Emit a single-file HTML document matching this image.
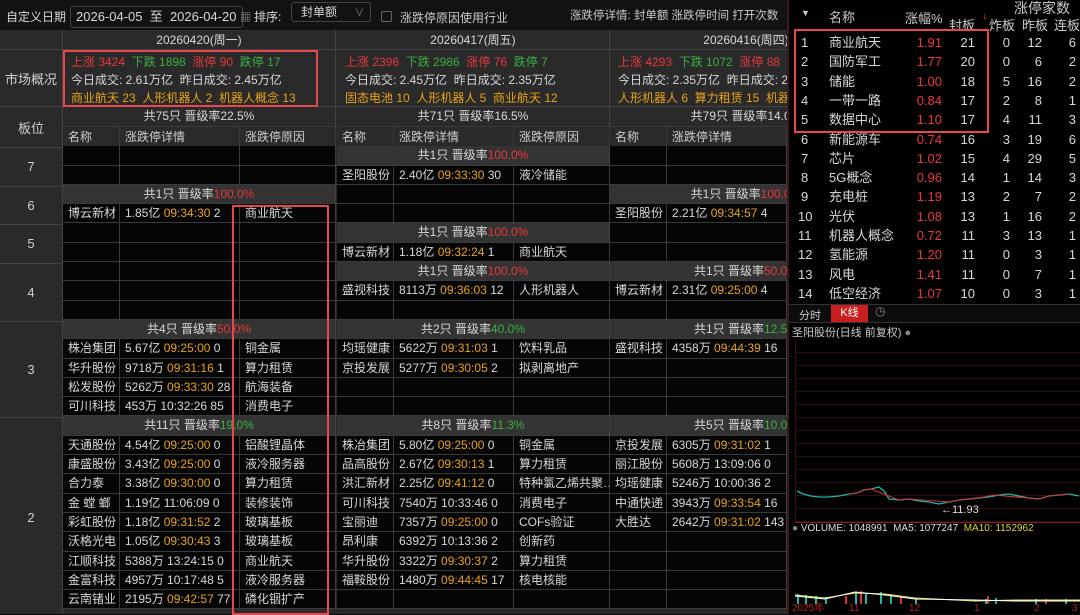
<!DOCTYPE html>
<html><head><meta charset="utf-8"><style>
*{margin:0;padding:0;box-sizing:border-box}
body{width:1080px;height:614px;overflow:hidden;background:#0a0a0a;font-family:"Liberation Sans","Noto Sans CJK SC",sans-serif;font-size:12px;color:#d8d8d8;position:relative}
.a{position:absolute;white-space:nowrap}
.top{left:0;top:0;width:787px;height:30px;background:#121212}
.left{left:0;top:30px;width:787px;height:584px;overflow:hidden;background:#2a2a2a}
.day{position:absolute;top:0;width:273px}
.hd{height:20px;line-height:20px;text-align:center;border-bottom:1px solid #444;border-right:1px solid #444;background:#2a2a2a}
.mk{height:57px;border-bottom:1px solid #444;border-right:1px solid #444;padding:3px 0 0 8px;line-height:18px;white-space:nowrap;overflow:hidden}
.r{height:19.3px;display:flex;white-space:nowrap}
.c{border-right:1px solid #3a3a3a;border-bottom:1px solid #3a3a3a;background:#050505;padding-left:5px;line-height:18px;overflow:hidden;height:19.3px}
.g{width:100%;background:#333;text-align:center;line-height:19px;border-bottom:1px solid #3a3a3a;border-right:1px solid #444}
.h .c{background:#2a2a2a;color:#cfcfcf}
.w1{width:57px}.w2{width:120px}.w3{width:96px}
i{font-style:normal;color:#e8a317}
b{font-weight:normal;color:#e8383d}
u{text-decoration:none;color:#3cb043}
.lab{left:0;width:63px;background:#2a2a2a;text-align:center;border-right:1px solid #444;border-bottom:1px solid #444;color:#d0d0d0;display:flex;align-items:center;justify-content:center;font-size:13px}
.box{border:2px solid #e8484d;position:absolute}
.rp{left:787px;top:0;width:293px;height:614px;background:#000;border-left:2px solid #3a1a1a}
.rr{position:absolute;left:0;width:293px;height:19.3px;line-height:19px;font-size:13px}
.rr span{position:absolute}
</style></head><body>
<div class="a top">
<span class="a" style="left:6px;top:8px;font-size:12px">自定义日期</span>
<div class="a" style="left:70px;top:6px;width:173px;height:22px;border:1px solid #444;border-radius:3px;padding-left:5px;line-height:20px;font-size:13px">2026-04-05&nbsp; 至 &nbsp;2026-04-20 <span style="font-size:11px;color:#999">▦</span></div>
<span class="a" style="left:254px;top:8px">排序:</span>
<div class="a" style="left:291px;top:2px;width:80px;height:20px;border:1px solid #444;border-radius:3px;padding-left:9px;line-height:18px">封单额 <span style="margin-left:14px;color:#888;font-size:10px">∨</span></div>
<div class="a" style="left:381px;top:11px;width:11px;height:11px;border:1px solid #666;border-radius:2px"></div>
<span class="a" style="left:400px;top:9px;color:#ccc">涨跌停原因使用行业</span>
<span class="a" style="left:570px;top:7px;color:#ccc;font-size:11.5px">涨跌停详情: 封单额 涨跌停时间 打开次数</span>
</div>
<div class="a left">
<div class="a lab" style="top:0;height:20px"></div>
<div class="a lab" style="top:20px;height:57px">市场概况</div>
<div class="a lab" style="top:77px;height:41px">板位</div>
<div class="a lab" style="top:118px;height:38.6px">7</div>
<div class="a lab" style="top:156.6px;height:38.6px">6</div>
<div class="a lab" style="top:195.2px;height:38.6px">5</div>
<div class="a lab" style="top:233.8px;height:57.9px">4</div>
<div class="a lab" style="top:291.7px;height:96.5px">3</div>
<div class="a lab" style="top:388.2px;height:200px">2</div>

<div class="day" style="left:63px">
<div class="hd">20260420(周一)</div>
<div class="mk"><b>上涨 3424</b>&nbsp; <u>下跌 1898</u>&nbsp; <b>涨停 90</b>&nbsp; <u>跌停 17</u><br>今日成交: 2.61万亿&nbsp; 昨日成交: 2.45万亿<br><i>商业航天 23&nbsp; 人形机器人 2&nbsp; 机器人概念 13</i></div>
<div class="g" style="height:20px;background:#2a2a2a">共75只 晋级率22.5%</div>
<div class="r h"><div class="c w1" style="height:21px;line-height:20px">名称</div><div class="c w2" style="height:21px;line-height:20px">涨跌停详情</div><div class="c w3" style="height:21px;line-height:20px">涨跌停原因</div></div>
<div class="r"><div class="c w1"></div><div class="c w2"></div><div class="c w3"></div></div>
<div class="r"><div class="c w1"></div><div class="c w2"></div><div class="c w3"></div></div>
<div class="r"><div class="g">共1只 晋级率<b>100.0%</b></div></div>
<div class="r"><div class="c w1">博云新材</div><div class="c w2">1.85亿 <i>09:34:30</i> 2</div><div class="c w3">商业航天</div></div>
<div class="r"><div class="c w1"></div><div class="c w2"></div><div class="c w3"></div></div>
<div class="r"><div class="c w1"></div><div class="c w2"></div><div class="c w3"></div></div>
<div class="r"><div class="c w1"></div><div class="c w2"></div><div class="c w3"></div></div>
<div class="r"><div class="c w1"></div><div class="c w2"></div><div class="c w3"></div></div>
<div class="r"><div class="c w1"></div><div class="c w2"></div><div class="c w3"></div></div>
<div class="r"><div class="g">共4只 晋级率<b>50.0%</b></div></div>
<div class="r"><div class="c w1">株冶集团</div><div class="c w2">5.67亿 <i>09:25:00</i> 0</div><div class="c w3">铜金属</div></div>
<div class="r"><div class="c w1">华升股份</div><div class="c w2">9718万 <i>09:31:16</i> 1</div><div class="c w3">算力租赁</div></div>
<div class="r"><div class="c w1">松发股份</div><div class="c w2">5262万 <i>09:33:30</i> 28</div><div class="c w3">航海装备</div></div>
<div class="r"><div class="c w1">可川科技</div><div class="c w2">453万 10:32:26 85</div><div class="c w3">消费电子</div></div>
<div class="r"><div class="g">共11只 晋级率<u>19.0%</u></div></div>
<div class="r"><div class="c w1">天通股份</div><div class="c w2">4.54亿 <i>09:25:00</i> 0</div><div class="c w3">铝酸锂晶体</div></div>
<div class="r"><div class="c w1">康盛股份</div><div class="c w2">3.43亿 <i>09:25:00</i> 0</div><div class="c w3">液冷服务器</div></div>
<div class="r"><div class="c w1">合力泰</div><div class="c w2">3.38亿 <i>09:30:00</i> 0</div><div class="c w3">算力租赁</div></div>
<div class="r"><div class="c w1">金 螳 螂</div><div class="c w2">1.19亿 11:06:09 0</div><div class="c w3">装修装饰</div></div>
<div class="r"><div class="c w1">彩虹股份</div><div class="c w2">1.18亿 <i>09:31:52</i> 2</div><div class="c w3">玻璃基板</div></div>
<div class="r"><div class="c w1">沃格光电</div><div class="c w2">1.05亿 <i>09:30:43</i> 3</div><div class="c w3">玻璃基板</div></div>
<div class="r"><div class="c w1">江顺科技</div><div class="c w2">5388万 13:24:15 0</div><div class="c w3">商业航天</div></div>
<div class="r"><div class="c w1">金富科技</div><div class="c w2">4957万 10:17:48 5</div><div class="c w3">液冷服务器</div></div>
<div class="r"><div class="c w1">云南锗业</div><div class="c w2">2195万 <i>09:42:57</i> 77</div><div class="c w3">磷化铟扩产</div></div>
</div>

<div class="day" style="left:337px">
<div class="hd">20260417(周五)</div>
<div class="mk"><b>上涨 2396</b>&nbsp; <u>下跌 2986</u>&nbsp; <b>涨停 76</b>&nbsp; <u>跌停 7</u><br>今日成交: 2.45万亿&nbsp; 昨日成交: 2.35万亿<br><i>固态电池 10&nbsp; 人形机器人 5&nbsp; 商业航天 12</i></div>
<div class="g" style="height:20px;background:#2a2a2a">共71只 晋级率16.5%</div>
<div class="r h"><div class="c w1" style="height:21px;line-height:20px">名称</div><div class="c w2" style="height:21px;line-height:20px">涨跌停详情</div><div class="c w3" style="height:21px;line-height:20px">涨跌停原因</div></div>
<div class="r"><div class="g">共1只 晋级率<b>100.0%</b></div></div>
<div class="r"><div class="c w1">圣阳股份</div><div class="c w2">2.40亿 <i>09:33:30</i> 30</div><div class="c w3">液冷储能</div></div>
<div class="r"><div class="c w1"></div><div class="c w2"></div><div class="c w3"></div></div>
<div class="r"><div class="c w1"></div><div class="c w2"></div><div class="c w3"></div></div>
<div class="r"><div class="g">共1只 晋级率<b>100.0%</b></div></div>
<div class="r"><div class="c w1">博云新材</div><div class="c w2">1.18亿 <i>09:32:24</i> 1</div><div class="c w3">商业航天</div></div>
<div class="r"><div class="g">共1只 晋级率<b>100.0%</b></div></div>
<div class="r"><div class="c w1">盛视科技</div><div class="c w2">8113万 <i>09:36:03</i> 12</div><div class="c w3">人形机器人</div></div>
<div class="r"><div class="c w1"></div><div class="c w2"></div><div class="c w3"></div></div>
<div class="r"><div class="g">共2只 晋级率<u>40.0%</u></div></div>
<div class="r"><div class="c w1">均瑶健康</div><div class="c w2">5622万 <i>09:31:03</i> 1</div><div class="c w3">饮料乳品</div></div>
<div class="r"><div class="c w1">京投发展</div><div class="c w2">5277万 <i>09:30:05</i> 2</div><div class="c w3">拟剥离地产</div></div>
<div class="r"><div class="c w1"></div><div class="c w2"></div><div class="c w3"></div></div>
<div class="r"><div class="c w1"></div><div class="c w2"></div><div class="c w3"></div></div>
<div class="r"><div class="g">共8只 晋级率<u>11.3%</u></div></div>
<div class="r"><div class="c w1">株冶集团</div><div class="c w2">5.80亿 <i>09:25:00</i> 0</div><div class="c w3">铜金属</div></div>
<div class="r"><div class="c w1">品高股份</div><div class="c w2">2.67亿 <i>09:30:13</i> 1</div><div class="c w3">算力租赁</div></div>
<div class="r"><div class="c w1">洪汇新材</div><div class="c w2">2.25亿 <i>09:41:12</i> 0</div><div class="c w3">特种氯乙烯共聚…</div></div>
<div class="r"><div class="c w1">可川科技</div><div class="c w2">7540万 10:33:46 0</div><div class="c w3">消费电子</div></div>
<div class="r"><div class="c w1">宝丽迪</div><div class="c w2">7357万 <i>09:25:00</i> 0</div><div class="c w3">COFs验证</div></div>
<div class="r"><div class="c w1">昂利康</div><div class="c w2">6392万 10:13:36 2</div><div class="c w3">创新药</div></div>
<div class="r"><div class="c w1">华升股份</div><div class="c w2">3322万 <i>09:30:37</i> 2</div><div class="c w3">算力租赁</div></div>
<div class="r"><div class="c w1">福鞍股份</div><div class="c w2">1480万 <i>09:44:45</i> 17</div><div class="c w3">核电核能</div></div>
<div class="r"><div class="c w1"></div><div class="c w2"></div><div class="c w3"></div></div>
</div>

<div class="day" style="left:610px">
<div class="hd">20260416(周四)</div>
<div class="mk"><b>上涨 4293</b>&nbsp; <u>下跌 1072</u>&nbsp; <b>涨停 88</b>&nbsp; <u>跌停 9</u><br>今日成交: 2.35万亿&nbsp; 昨日成交: 2.45万亿<br><i>人形机器人 6&nbsp; 算力租赁 15&nbsp; 机器人概念 9</i></div>
<div class="g" style="height:20px;background:#2a2a2a">共79只 晋级率14.0%</div>
<div class="r h"><div class="c w1" style="height:21px;line-height:20px">名称</div><div class="c w2" style="height:21px;line-height:20px">涨跌停详情</div><div class="c w3" style="height:21px;line-height:20px">涨跌停原因</div></div>
<div class="r"><div class="c w1"></div><div class="c w2"></div><div class="c w3"></div></div>
<div class="r"><div class="c w1"></div><div class="c w2"></div><div class="c w3"></div></div>
<div class="r"><div class="g">共1只 晋级率<b>100.0%</b></div></div>
<div class="r"><div class="c w1">圣阳股份</div><div class="c w2">2.21亿 <i>09:34:57</i> 4</div><div class="c w3">液冷储能</div></div>
<div class="r"><div class="c w1"></div><div class="c w2"></div><div class="c w3"></div></div>
<div class="r"><div class="c w1"></div><div class="c w2"></div><div class="c w3"></div></div>
<div class="r"><div class="g">共1只 晋级率<b>50.0%</b></div></div>
<div class="r"><div class="c w1">博云新材</div><div class="c w2">2.31亿 <i>09:25:00</i> 4</div><div class="c w3">商业航天</div></div>
<div class="r"><div class="c w1"></div><div class="c w2"></div><div class="c w3"></div></div>
<div class="r"><div class="g">共1只 晋级率<u>12.5%</u></div></div>
<div class="r"><div class="c w1">盛视科技</div><div class="c w2">4358万 <i>09:44:39</i> 16</div><div class="c w3">人形机器人</div></div>
<div class="r"><div class="c w1"></div><div class="c w2"></div><div class="c w3"></div></div>
<div class="r"><div class="c w1"></div><div class="c w2"></div><div class="c w3"></div></div>
<div class="r"><div class="c w1"></div><div class="c w2"></div><div class="c w3"></div></div>
<div class="r"><div class="g">共5只 晋级率<u>10.0%</u></div></div>
<div class="r"><div class="c w1">京投发展</div><div class="c w2">6305万 <i>09:31:02</i> 1</div><div class="c w3">拟剥离地产</div></div>
<div class="r"><div class="c w1">丽江股份</div><div class="c w2">5608万 13:09:06 0</div><div class="c w3">旅游</div></div>
<div class="r"><div class="c w1">均瑶健康</div><div class="c w2">5246万 10:00:36 2</div><div class="c w3">饮料乳品</div></div>
<div class="r"><div class="c w1">中通快递</div><div class="c w2">3943万 <i>09:33:54</i> 16</div><div class="c w3">快递</div></div>
<div class="r"><div class="c w1">大胜达</div><div class="c w2">2642万 <i>09:31:02</i> 143</div><div class="c w3">包装</div></div>
<div class="r"><div class="c w1"></div><div class="c w2"></div><div class="c w3"></div></div>
<div class="r"><div class="c w1"></div><div class="c w2"></div><div class="c w3"></div></div>
<div class="r"><div class="c w1"></div><div class="c w2"></div><div class="c w3"></div></div>
<div class="r"><div class="c w1"></div><div class="c w2"></div><div class="c w3"></div></div>
</div>
</div>

<div class="box" style="left:63px;top:50px;width:255px;height:57px"></div>
<div class="box" style="left:232px;top:205px;width:97px;height:410px"></div>

<div class="a rp">
<div class="a" style="left:0;top:0;width:293px;height:31px;font-size:13px;color:#ccc">
<span class="a" style="left:12px;top:8px;font-size:9px">▼</span>
<span class="a" style="left:40px;top:7px">名称</span>
<span class="a" style="left:116px;top:8px">涨幅%</span>
<span class="a" style="left:225px;top:-2px;font-size:14px">涨停家数</span>
<span class="a" style="left:160px;top:15px">封板</span><span class="a" style="left:193px;top:11px;color:#e8383d;font-size:10px">↓</span>
<span class="a" style="left:200px;top:15px">炸板</span>
<span class="a" style="left:233px;top:15px">昨板</span>
<span class="a" style="left:265px;top:15px">连板</span>
</div>
<div style="position:absolute;left:0;top:33px;width:293px">
<div class="rr" style="top:0"><span style="left:12px">1</span><span style="left:40px">商业航天</span><span style="right:140px;color:#e8383d">1.91</span><span style="right:107px">21</span><span style="right:72px">0</span><span style="right:40px">12</span><span style="right:6px">6</span></div>
<div class="rr" style="top:19.3px"><span style="left:12px">2</span><span style="left:40px">国防军工</span><span style="right:140px;color:#e8383d">1.77</span><span style="right:107px">20</span><span style="right:72px">0</span><span style="right:40px">6</span><span style="right:6px">2</span></div>
<div class="rr" style="top:38.6px"><span style="left:12px">3</span><span style="left:40px">储能</span><span style="right:140px;color:#e8383d">1.00</span><span style="right:107px">18</span><span style="right:72px">5</span><span style="right:40px">16</span><span style="right:6px">2</span></div>
<div class="rr" style="top:57.9px"><span style="left:12px">4</span><span style="left:40px">一带一路</span><span style="right:140px;color:#e8383d">0.84</span><span style="right:107px">17</span><span style="right:72px">2</span><span style="right:40px">8</span><span style="right:6px">1</span></div>
<div class="rr" style="top:77.2px"><span style="left:12px">5</span><span style="left:40px">数据中心</span><span style="right:140px;color:#e8383d">1.10</span><span style="right:107px">17</span><span style="right:72px">4</span><span style="right:40px">11</span><span style="right:6px">3</span></div>
<div class="rr" style="top:96.5px"><span style="left:12px">6</span><span style="left:40px">新能源车</span><span style="right:140px;color:#e8383d">0.74</span><span style="right:107px">16</span><span style="right:72px">3</span><span style="right:40px">19</span><span style="right:6px">6</span></div>
<div class="rr" style="top:115.8px"><span style="left:12px">7</span><span style="left:40px">芯片</span><span style="right:140px;color:#e8383d">1.02</span><span style="right:107px">15</span><span style="right:72px">4</span><span style="right:40px">29</span><span style="right:6px">5</span></div>
<div class="rr" style="top:135.1px"><span style="left:12px">8</span><span style="left:40px">5G概念</span><span style="right:140px;color:#e8383d">0.96</span><span style="right:107px">14</span><span style="right:72px">1</span><span style="right:40px">14</span><span style="right:6px">3</span></div>
<div class="rr" style="top:154.4px"><span style="left:12px">9</span><span style="left:40px">充电桩</span><span style="right:140px;color:#e8383d">1.19</span><span style="right:107px">13</span><span style="right:72px">2</span><span style="right:40px">7</span><span style="right:6px">2</span></div>
<div class="rr" style="top:173.7px"><span style="left:9px">10</span><span style="left:40px">光伏</span><span style="right:140px;color:#e8383d">1.08</span><span style="right:107px">13</span><span style="right:72px">1</span><span style="right:40px">16</span><span style="right:6px">2</span></div>
<div class="rr" style="top:193px"><span style="left:9px">11</span><span style="left:40px">机器人概念</span><span style="right:140px;color:#e8383d">0.72</span><span style="right:107px">11</span><span style="right:72px">3</span><span style="right:40px">13</span><span style="right:6px">1</span></div>
<div class="rr" style="top:212.3px"><span style="left:9px">12</span><span style="left:40px">氢能源</span><span style="right:140px;color:#e8383d">1.20</span><span style="right:107px">11</span><span style="right:72px">0</span><span style="right:40px">3</span><span style="right:6px">1</span></div>
<div class="rr" style="top:231.6px"><span style="left:9px">13</span><span style="left:40px">风电</span><span style="right:140px;color:#e8383d">1.41</span><span style="right:107px">11</span><span style="right:72px">0</span><span style="right:40px">7</span><span style="right:6px">1</span></div>
<div class="rr" style="top:250.9px"><span style="left:9px">14</span><span style="left:40px">低空经济</span><span style="right:140px;color:#e8383d">1.07</span><span style="right:107px">10</span><span style="right:72px">0</span><span style="right:40px">3</span><span style="right:6px">1</span></div>
</div>
<div class="a" style="left:0;top:304px;width:293px;height:19px;border-top:1px solid #333;border-bottom:1px solid #333;background:#0c0c0c"></div>
<span class="a" style="left:10px;top:307px;font-size:11px;color:#ccc">分时</span>
<div class="a" style="left:42px;top:305px;width:37px;height:17px;background:#c81e1e;color:#fff;font-size:11px;text-align:center;line-height:17px">K线</div>
<span class="a" style="left:86px;top:304px;color:#888;font-size:12px">◷</span>
<span class="a" style="left:3px;top:324px;font-size:11px;color:#ccc">圣阳股份(日线 前复权) <span style="color:#888">●</span></span>
<div class="a" style="left:6px;top:340px;width:287px;height:182px;background:repeating-linear-gradient(to bottom,transparent 0,transparent 12px,#2a0d0d 12px,#2a0d0d 13px);border-left:1px solid #3a1010"></div>
<svg class="a" style="left:0;top:485px" width="293" height="35"><polyline fill="none" stroke="#1fb5a8" stroke-width="1.3" points="8,6 14,9 22,11 30,12 40,12 50,11 60,9 68,8 75,5 82,4 90,2 95,6 100,14 110,15 120,14 130,16 140,17 150,19 160,17 170,15 180,14 190,13 200,12 210,10 220,9 230,11 240,13 250,14 260,11 270,10 280,9 290,11"/><polyline fill="none" stroke="#d83030" stroke-width="1.1" points="60,9 68,8 75,5 82,4 110,15 120,14 160,17 170,15 195,12 205,10 250,14 260,11 280,9"/></svg>
<span class="a" style="left:152px;top:504px;font-size:11px;color:#ddd">←11.93</span>
<div class="a" style="left:6px;top:522px;width:287px;height:1px;background:#8a1a1a"></div>
<span class="a" style="left:3px;top:523px;font-size:10px;color:#ddd"><span style="color:#888">●</span> VOLUME: 1048991&nbsp; MA5: 1077247&nbsp; <span style="color:#d6d62a">MA10: 1152962</span></span>
<svg class="a" style="left:6px;top:590px" width="287" height="14"><g fill="#1fb5a8"><rect x="2" y="4" width="2" height="10"/><rect x="10" y="5" width="2" height="9"/><rect x="20" y="6" width="2" height="8"/><rect x="30" y="7" width="2" height="7"/><rect x="60" y="3" width="2" height="11"/><rect x="70" y="4" width="2" height="10"/><rect x="85" y="2" width="2" height="12"/><rect x="95" y="5" width="2" height="9"/><rect x="120" y="8" width="2" height="6"/><rect x="190" y="9" width="2" height="5"/><rect x="200" y="8" width="2" height="6"/><rect x="240" y="9" width="2" height="5"/><rect x="270" y="9" width="2" height="5"/></g><g fill="#d83030"><rect x="50" y="6" width="2" height="8"/><rect x="65" y="1" width="2" height="13"/><rect x="105" y="6" width="2" height="8"/><rect x="192" y="6" width="2" height="8"/><rect x="250" y="9" width="2" height="5"/></g><polyline fill="none" stroke="#e6e650" stroke-width="1" points="0,5 30,8 60,3 90,4 120,8 180,11 220,10 287,10"/><polyline fill="none" stroke="#fff" stroke-width="1" points="0,6 30,9 60,2 90,5 120,9 180,10 220,11 287,11"/></svg>
<div class="a" style="left:0;top:604px;width:293px;height:10px;color:#b02020;font-size:10px;line-height:10px"><span class="a" style="left:3px">2025年</span><span class="a" style="left:60px">11</span><span class="a" style="left:120px">12</span><span class="a" style="left:185px">1</span><span class="a" style="left:245px">2</span><span class="a" style="left:283px">3</span></div>
<div class="box" style="left:5px;top:29px;width:195px;height:104px"></div>
</div>
</body></html>
